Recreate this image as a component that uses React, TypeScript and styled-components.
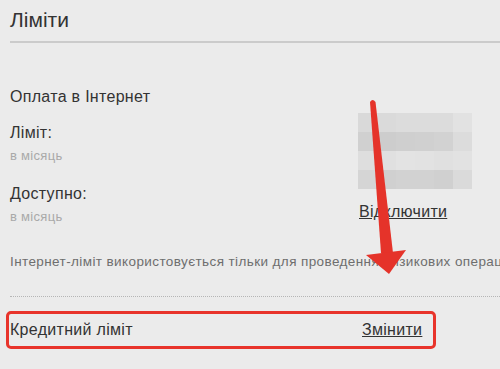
import React from "react";
import styled, { createGlobalStyle } from "styled-components";

const Global = createGlobalStyle`
  html, body { margin: 0; padding: 0; }
  body {
    background: #ebebeb;
    font-family: "Liberation Sans", Arial, sans-serif;
    color: #333;
    overflow: hidden;
  }
`;

const Page = styled.div`
  position: relative;
  width: 500px;
  height: 369px;
  overflow: hidden;
  padding-left: 10px;
  box-sizing: border-box;
`;

const Header = styled.h1`
  margin: 0;
  padding-top: 8px;
  height: 33px;
  box-sizing: content-box;
  font-size: 21px;
  font-weight: normal;
  line-height: 24px;
  color: #333;
  border-bottom: 2px solid #cbcbcb;
`;

const SectionTitle = styled.div`
  margin-top: 45px;
  font-size: 16px;
  line-height: 18px;
  letter-spacing: 0.3px;
`;

const Columns = styled.div`
  display: flex;
  margin-top: 7px;
`;

const LeftCol = styled.div`
  width: 348px;
  display: flex;
  flex-direction: column;
  padding-top: 11px;
`;

const RightCol = styled.div`
  display: flex;
  flex-direction: column;
  align-items: flex-start;
`;

const Label = styled.div<{ $gap?: number }>`
  font-size: 16px;
  line-height: 18px;
  letter-spacing: 0.3px;
  margin-top: ${(p) => p.$gap ?? 0}px;
`;

const Sub = styled.div`
  font-size: 13px;
  line-height: 15px;
  letter-spacing: 0.3px;
  margin-top: 6px;
  color: #a9a9a9;
`;

const Pixelated = styled.div`
  display: grid;
  grid-template-columns: repeat(6, 19px);
  grid-template-rows: repeat(4, 19px);
  width: 114px;
`;

const Cell = styled.div<{ $c: string }>`
  background: ${(p) => p.$c};
`;

const Link = styled.a<{ $top?: number }>`
  display: inline-block;
  font-size: 16px;
  line-height: 18px;
  letter-spacing: 0.3px;
  color: #333;
  text-decoration: underline;
  margin-top: ${(p) => p.$top ?? 0}px;
  padding-left: 1px;
  cursor: pointer;
`;

const Note = styled.div`
  margin-top: 30px;
  font-size: 13.5px;
  line-height: 15px;
  letter-spacing: 0.4px;
  color: #6e6e6e;
  white-space: nowrap;
`;

const Dotted = styled.div`
  margin-top: 27px;
  border-top: 1px dotted #b5b5b5;
`;

const CreditRow = styled.div`
  margin-top: 14px;
  margin-left: -4px;
  width: 430px;
  height: 38px;
  box-sizing: border-box;
  border: 3px solid #e8342b;
  border-radius: 5px;
  padding-left: 1px;
  display: flex;
  align-items: center;
`;

const CreditLabel = styled.div`
  width: 351px;
  font-size: 16px;
  line-height: 18px;
  letter-spacing: 0.3px;
`;

const ArrowLayer = styled.svg`
  position: absolute;
  left: 0;
  top: 0;
  pointer-events: none;
`;

const rows = [
  ["#d9d9d9", "#dadada", "#dcdcdc", "#dcdcdc", "#dcdcdc", "#e2e2e2"],
  ["#d0d0d0", "#cdcdcd", "#cfcfcf", "#d0d0d0", "#d2d2d2", "#dcdcdc"],
  ["#dedede", "#e0e0e0", "#e3e3e3", "#e2e2e2", "#e0e0e0", "#e2e2e2"],
  ["#d5d5d5", "#d0d0d0", "#d2d2d2", "#d2d2d2", "#d0d0d0", "#dadada"],
];

export default function App() {
  return (
    <>
      <Global />
      <Page>
        <Header>Ліміти</Header>
        <SectionTitle>Оплата в Інтернет</SectionTitle>
        <Columns>
          <LeftCol>
            <Label>Ліміт:</Label>
            <Sub>в місяць</Sub>
            <Label $gap={22}>Доступно:</Label>
            <Sub>в місяць</Sub>
          </LeftCol>
          <RightCol>
            <Pixelated>
              {rows.flat().map((c, i) => (
                <Cell key={i} $c={c} />
              ))}
            </Pixelated>
            <Link $top={14}>Відключити</Link>
          </RightCol>
        </Columns>
        <Note>
          Інтернет-ліміт використовується тільки для проведення ризикових операцій
        </Note>
        <Dotted />
        <CreditRow>
          <CreditLabel>Кредитний ліміт</CreditLabel>
          <Link>Змінити</Link>
        </CreditRow>
        <ArrowLayer width="500" height="369" viewBox="0 0 500 369">
          <path
            d="M370 102 Q372.5 98 375.5 102 L393 253 L381 253 Z"
            fill="#e5332a"
          />
          <path d="M366 255 L406 250 L389 274 Z" fill="#e5332a" />
        </ArrowLayer>
      </Page>
    </>
  );
}
